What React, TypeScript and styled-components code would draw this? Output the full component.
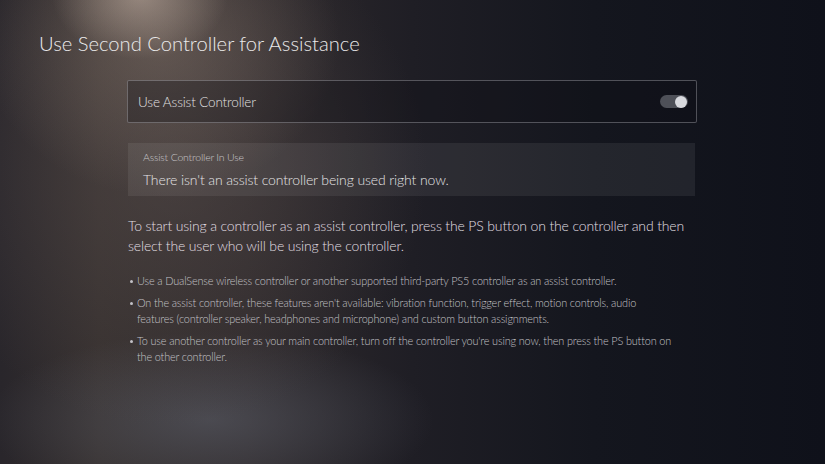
import styled, { createGlobalStyle } from "styled-components";

const GlobalStyle = createGlobalStyle`
  html, body {
    margin: 0;
    padding: 0;
    width: 825px;
    height: 464px;
    overflow: hidden;
    background: #12141c;
  }
  * {
    box-sizing: border-box;
  }
`;

// dark console backdrop: a warm spotlight from the top, a grey haze bottom-left
const Screen = styled.div`
  width: 825px;
  height: 464px;
  overflow: hidden;
  font-family: Lato, "Noto Sans", sans-serif;
  font-weight: 300;
  color: #e6e6e8;
  background:
    radial-gradient(ellipse 110px 80px at 140px -5px, rgba(215, 195, 180, 0.5), transparent 80%),
    radial-gradient(ellipse 230px 200px at 160px 40px, rgba(150, 132, 120, 0.42), transparent 78%),
    radial-gradient(ellipse 330px 330px at 170px 170px, rgba(95, 84, 82, 0.45), transparent 78%),
    radial-gradient(ellipse 280px 110px at 210px 420px, rgba(100, 104, 116, 0.5), transparent 80%),
    linear-gradient(90deg, #29262b 0%, #36302f 12%, #2f2a2c 30%, #1f1e25 50%, #14161e 72%, #0f111a 100%);
  padding: 30px 0 0 39px;
`;

const Title = styled.h1`
  margin: 0;
  font-size: 20.2px;
  font-weight: 300;
  letter-spacing: 0;
  color: #eae9ea;
  line-height: 26px;
`;

const Content = styled.div`
  width: 570px;
  margin: 24px 0 0 88px;
  display: flex;
  flex-direction: column;
`;

const ToggleCard = styled.div`
  height: 43px;
  display: flex;
  align-items: center;
  justify-content: space-between;
  padding: 0 8px 0 10px;
  border: 1px solid rgba(200, 200, 210, 0.35);
  border-radius: 2px;
  background: rgba(12, 13, 20, 0.3);
  font-size: 13.5px;
  letter-spacing: -0.15px;
  color: #e2e1e2;
`;

const Switch = styled.div<{ $on: boolean }>`
  width: 28px;
  height: 13px;
  border-radius: 7px;
  background: #4e5058;
  display: flex;
  align-items: center;
  justify-content: ${(p) => (p.$on ? "flex-end" : "flex-start")};
  padding: 0 1px;

  &::after {
    content: "";
    width: 12px;
    height: 12px;
    border-radius: 50%;
    background: #d8d9de;
  }
`;

const InfoBox = styled.div`
  margin: 20px 2px 0 1px;
  height: 53px;
  padding: 8px 15px 0;
  background: rgba(255, 255, 255, 0.07);
  display: flex;
  flex-direction: column;
  gap: 8px;
`;

const InfoLabel = styled.div`
  font-size: 10.5px;
  letter-spacing: -0.2px;
  color: #c8c7ca;
`;

const InfoText = styled.div`
  font-size: 14px;
  letter-spacing: -0.12px;
  color: #e4e3e5;
`;

const Lead = styled.p`
  margin: 20px 0 0 1px;
  font-size: 14px;
  line-height: 20px;
  letter-spacing: -0.15px;
  color: #e0dfe2;
`;

const Notes = styled.ul`
  width: 547px;
  margin: 17px 0 0 1px;
  padding: 0;
  list-style: none;
  display: flex;
  flex-direction: column;
  gap: 6px;
`;

const Note = styled.li`
  position: relative;
  padding-left: 9px;
  font-size: 10.9px;
  line-height: 16px;
  letter-spacing: -0.15px;
  color: #c2c1c6;

  &::before {
    content: "";
    position: absolute;
    left: 2px;
    top: 7px;
    width: 3px;
    height: 3px;
    border-radius: 50%;
    background: #c2c1c6;
  }
`;

const notes = [
  "Use a DualSense wireless controller or another supported third-party PS5 controller as an assist controller.",
  "On the assist controller, these features aren't available: vibration function, trigger effect, motion controls, audio features (controller speaker, headphones and microphone) and custom button assignments.",
  "To use another controller as your main controller, turn off the controller you're using now, then press the PS button on the other controller.",
];

export default function App() {
  return (
    <>
      <GlobalStyle />
      <Screen>
        <Title>Use Second Controller for Assistance</Title>
        <Content>
          <ToggleCard>
            <span>Use Assist Controller</span>
            <Switch $on />
          </ToggleCard>
          <InfoBox>
            <InfoLabel>Assist Controller In Use</InfoLabel>
            <InfoText>There isn't an assist controller being used right now.</InfoText>
          </InfoBox>
          <Lead>
            To start using a controller as an assist controller, press the PS button on the
            controller and then select the user who will be using the controller.
          </Lead>
          <Notes>
            {notes.map((n) => (
              <Note key={n}>{n}</Note>
            ))}
          </Notes>
        </Content>
      </Screen>
    </>
  );
}
